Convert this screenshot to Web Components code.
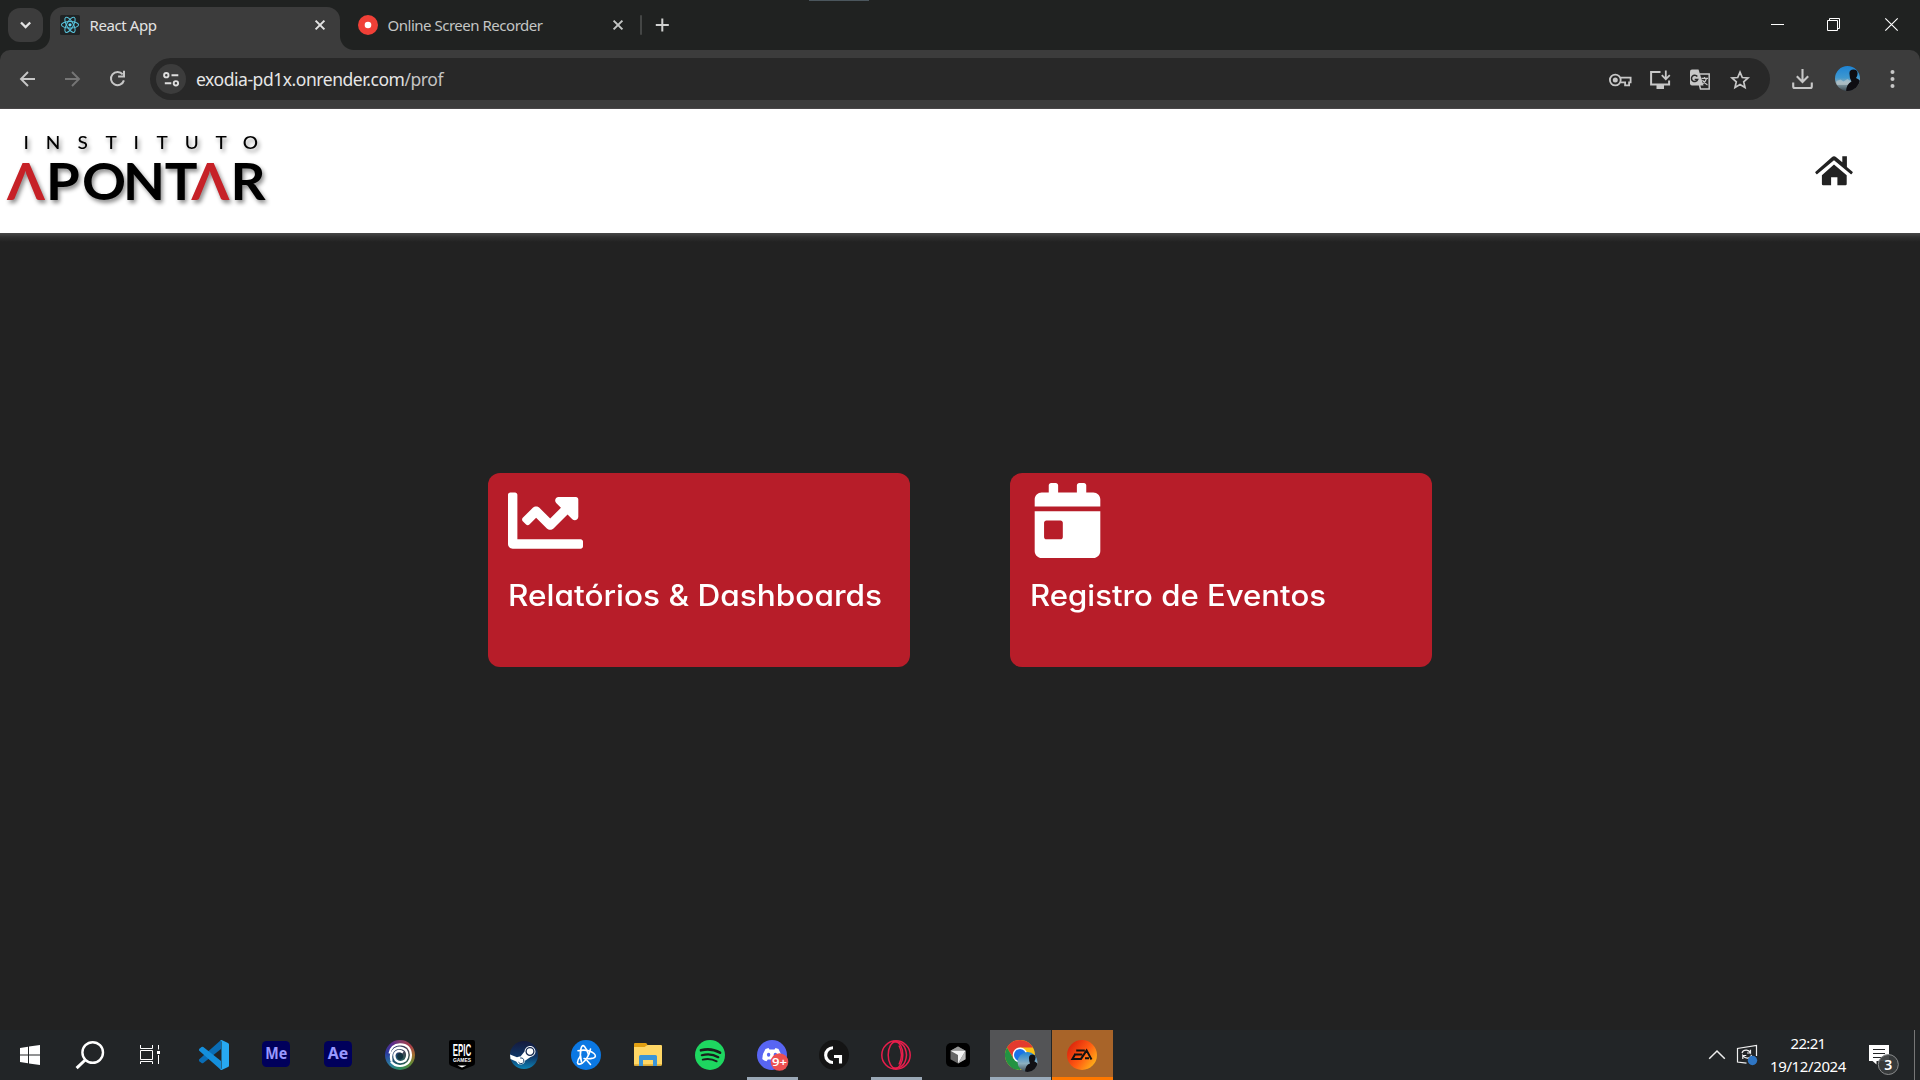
<!DOCTYPE html>
<html lang="pt-BR">
<head>
<meta charset="utf-8">
<title>React App</title>
<style>
html,body{margin:0;height:100%;overflow:hidden;background:#222}
body{font-family:"Noto Sans","Open Sans",sans-serif}
</style>
</head>
<body>
<desktop-screen></desktop-screen>
<script>
// name: [viewBox, markup]
const ICONS = {
  chevron:['8 8 35 34','<path d="M21 22.5l4.6 4.6 4.6-4.6" fill="none" stroke="#e3e3e3" stroke-width="2.3"/>'],
  react:['60 15 20 20','<rect x="60" y="15" width="20" height="20" rx="1.5" fill="#202324"/><g fill="none" stroke="#58c4dc" stroke-width="1.05"><ellipse cx="70" cy="24.8" rx="8.6" ry="3.3"/><ellipse cx="70" cy="24.8" rx="8.6" ry="3.3" transform="rotate(60 70 24.8)"/><ellipse cx="70" cy="24.8" rx="8.6" ry="3.3" transform="rotate(120 70 24.8)"/></g><circle cx="70" cy="24.8" r="1.6" fill="#61dafb"/>'],
  recorder:['358 15 20 20','<circle cx="368" cy="25" r="10" fill="#f04037"/><circle cx="368" cy="25" r="3.3" fill="#fff"/>'],
  close:['310 15 20 20','<path d="M315.6 20.6l8.8 8.8M324.4 20.6l-8.8 8.8" stroke="currentColor" stroke-width="2"/>'],
  plus:['652 15 20 20','<path d="M655.8 25h13M662.3 18.5v13" stroke="#d0d1d0" stroke-width="2"/>'],
  min:['1749 0 57 50','<path d="M1771 24.5h13" stroke="#fff"/>'],
  restore:['1806 0 57 50','<path d="M1827.5 20.5h10v10h-10zM1829.5 20v-1.500h10v10h-1.500" fill="none" stroke="#fff"/>'],
  winclose:['1863 0 57 50','<path d="M1885.300 18.300l12.400 12.400M1897.700 18.300l-12.400 12.400" stroke="#fff" stroke-width="1.150"/>'],
  back:['5 56 45 45','<path d="M35 79H21.500M28 72l-7 7 7 7" fill="none" stroke="#c7c7c7" stroke-width="1.900"/>'],
  forward:['50 56 45 45','<path d="M65 79h13.500M72 72l7 7-7 7" fill="none" stroke="#757575" stroke-width="1.900"/>'],
  reload:['95 56 45 45','<path d="M122.700 74.400A6.600 6.600 0 1 0 123.900 80.400" fill="none" stroke="#c7c7c7" stroke-width="2"/><path d="M125 70.800v6.800h-6.900v-2h4.900v-4.800z" fill="#c7c7c7"/>'],
  tune:['156 64 30 30','<circle cx="171" cy="79" r="15" fill="#3c3c3c"/><g fill="none" stroke="#dedede" stroke-width="1.900"><circle cx="166.300" cy="75.200" r="2.200"/><path d="M171.500 75.200h6.800M164.800 83.300h6.500"/><circle cx="175.900" cy="83.300" r="2.200"/></g>'],
  key:['1600 59 40 40','<g fill="none" stroke="#c7c7c7" stroke-width="1.800"><circle cx="1615.300" cy="80" r="5.400"/><path d="M1620.300 77.700h10.300v4.700h-1.500v3h-4v-3h-5"/></g><circle cx="1615.300" cy="80" r="2.500" fill="#c7c7c7"/>'],
  install:['1640 59 40 40','<path d="M1660.500 72h-9.400v12.400h18v-4" fill="none" stroke="#c7c7c7" stroke-width="2"/><path d="M1656.500 85h7.500v4h-7.500z" fill="#c7c7c7"/><path d="M1665.800 70.500v8M1661.800 75.200l4 4 4-4" fill="none" stroke="#c7c7c7" stroke-width="1.800"/>'],
  translate:['1680 59 40 40','<path d="M1699.500 74h9.700v15h-8.700l-1-4" fill="none" stroke="#c7c7c7" stroke-width="1.500"/><path d="M1692 69.500h6.500l5 16H1692q-2 0-2-2v-12q0-2 2-2z" fill="#c7c7c7"/><path d="M1697.300 76.500a3.200 3.200 0 1 0 .4 3h-3" fill="none" stroke="#282828" stroke-width="1.500"/><path d="M1701.500 78.300h6.500M1704.500 77v1.500M1706.500 78.500q-1 3.500-4 5.500M1702.500 80q1.500 3 5 5" fill="none" stroke="#c7c7c7" stroke-width="1.200"/>'],
  star:['1720 59 40 40','<path d="M1740 72.200l2.300 5.300 5.700.5-4.300 3.800 1.300 5.600-5-3-5 3 1.300-5.600-4.300-3.800 5.700-.5z" fill="none" stroke="#c7c7c7" stroke-width="1.700"/>'],
  download:['1780 56 45 45','<path d="M1802.500 69v12M1796.800 76.300l5.700 5.700 5.700-5.700M1793.200 82.500v4q0 1.500 1.500 1.500h15.600q1.500 0 1.500-1.500v-4" fill="none" stroke="#c7c7c7" stroke-width="2.100"/>'],
  avatar:['1835.500 66 25 25','<defs><linearGradient id="a" x2="0" y2="1"><stop stop-color="#1d83d4"/><stop offset=".45" stop-color="#3f98cf"/><stop offset=".65" stop-color="#8fa9b3"/><stop offset="1" stop-color="#313d46"/></linearGradient><clipPath id="c"><circle cx="1848" cy="78.500" r="12.500"/></clipPath></defs><g clip-path="url(#c)"><path d="M1835 66h26v26h-26z" fill="url(#a)"/><path d="M1837 81l4-1.500 3 2 4-2.500 3 2v4h-14z" fill="#c0cbd0" opacity=".6"/><path d="M1850 74q-.5-4.500 4-4.500t4 4.500q0 2.500-1.500 4 4.500 2 5 5v10h-15q0-9 5.500-11.500-2-2.500-2-7.500z" fill="#0e0d12"/></g>'],
  dots:['1870 56 45 45','<g fill="#c7c7c7"><circle cx="1892.500" cy="72" r="2"/><circle cx="1892.500" cy="79" r="2"/><circle cx="1892.500" cy="86" r="2"/></g>'],
  home:['1815 155 38 32','<g fill="#222"><path d="M1834 164.600l12.700 10.700v8.700q0 1.200-1.200 1.200h-8.100V177.200h-6.300v8h-8q-1.200 0-1.200-1.200v-8.700z"/><path d="M1842.300 156.300h4.600v10.600l5.600 4.800q.6.500.1 1.100l-.9 1.100q-.5.600-1.100.1L1834 160.300l-16.600 13.700q-.6.500-1.100-.1l-.9-1.100q-.5-.6.100-1.100l16.300-14.500q2.200-1.700 4.400 0l6.100 5.100z"/></g>'],
  chart:['0 0 512 512','<path fill="#fff" d="M496 384H64V80c0-8.840-7.160-16-16-16H16C7.160 64 0 71.160 0 80v336c0 17.670 14.330 32 32 32h464c8.840 0 16-7.160 16-16v-32c0-8.840-7.160-16-16-16zM464 96H345.940c-21.380 0-32.090 25.850-16.970 40.970l32.400 32.400L288 242.750l-73.370-73.370c-12.500-12.500-32.760-12.500-45.250 0l-68.690 68.690c-6.250 6.250-6.250 16.380 0 22.630l22.620 22.620c6.250 6.250 16.380 6.250 22.630 0L192 237.250l73.370 73.370c12.500 12.500 32.760 12.500 45.250 0l96-96 32.400 32.400c15.120 15.120 40.970 4.410 40.970-16.970V112c.01-8.840-7.150-16-15.990-16z"/>'],
  calendar:['0 0 448 512','<path fill="#fff" d="M0 464c0 26.500 21.500 48 48 48h352c26.500 0 48-21.500 48-48V192H0v272zm64-192c0-8.800 7.200-16 16-16h96c8.800 0 16 7.200 16 16v96c0 8.800-7.200 16-16 16H80c-8.800 0-16-7.200-16-16v-96zM400 64h-48V16c0-8.800-7.200-16-16-16h-32c-8.800 0-16 7.200-16 16v48H160V16c0-8.800-7.200-16-16-16h-32c-8.800 0-16 7.200-16 16v48H48C21.500 64 0 85.500 0 112v48h448v-48c0-26.500-21.500-48-48-48z"/>'],
  // taskbar icons, origin at the icon centre
  windows:['-20 -20 40 40','<path fill="#fff" d="M-10-7l8-1.200v7.700h-8zM-1-8.400L10-10v9.500H-1zM-10 .5h8v7.700l-8-1.200zM-1 .5h11V10L-1 8.400z"/>'],
  search:['-20 -20 40 40','<circle cx="2.700" cy="-2.500" r="10.300" fill="none" stroke="#fff" stroke-width="2.400"/><path d="M-4.800 5l-8.600 8.200" stroke="#fff" stroke-width="3"/>'],
  taskview:['-20 -20 40 40','<path d="M-9.500-10v3.500h12V-10M-9.500-4.500h12v9h-12zM-9.500 9V6.500h12V9M8.500-10v4.500M8.500 0v9" fill="none" stroke="#fff"/><path d="M7-4h3v3H7z" fill="#fff"/>'],
  vscode:['-20 -20 40 40','<path fill="#0a6db5" d="M-15 4.500q-.3 1 .4 1.700l2.100 1.800q.9.600 1.800 0L7-6v-9z"/><path fill="#148fdc" d="M-15-4.500q-.3-1 .4-1.700l2.100-1.800q.9-.6 1.800 0L7 6v9z"/><path fill="#27a9f2" d="M6-14.500q1-.8 2.200-.3L14-12q1 .5 1 1.600v20.800q0 1.100-1 1.600L8.200 14.800Q7 15.300 6 14.500q1.500.3 1.500-1.500v-26q0-1.800-1.500-1.500z"/>'],
  me:['-20 -20 40 40','<rect x="-14" y="-14" width="28" height="26" rx="4.500" fill="#00005b"/><text x=".2" y="4.200" text-anchor="middle" font-size="16.500" font-weight="700" textLength="22" lengthAdjust="spacingAndGlyphs" fill="#9999ff">Me</text>'],
  ae:['-20 -20 40 40','<rect x="-14" y="-14" width="28" height="26" rx="4.500" fill="#00005b"/><text x="0" y="4.200" text-anchor="middle" font-size="16.500" font-weight="700" textLength="20.500" lengthAdjust="spacingAndGlyphs" fill="#9999ff">Ae</text>'],
  ubisoft:['-20 -20 40 40','<foreignObject x="-15" y="-15" width="30" height="30"><div style="width:30px;height:30px;border-radius:50%;background:conic-gradient(#803a6a,#a83f48 50deg,#a07030 90deg,#5f8a35 130deg,#2c8a60 180deg,#2c7fa0 225deg,#2a3a9e 280deg,#5a2a8e 325deg,#803a6a)"></div></foreignObject><circle r="10" fill="#1f4560" opacity=".75"/><g fill="none" stroke="#fff"><path d="M-10.500-1.500Q-9-10.500 0-10.800 10.500-10.500 11 0 10.500 10.500 0 11-5.500 11-9 6.500" stroke-width="2.100"/><path d="M-8.500 6Q-10.500-2-5-6 1-9 5.700-5 9 0 5.500 5.200 0 9-4.200 5.200-7.500 0-3.500-3.300 0-5 3-2.500" stroke-width="2.300"/></g><path d="M-3 1.500Q-2.500-2.500 1-2 4.200-.5 2.800 3 .5 6-2 4z" fill="#12323e"/>'],
  epic:['-20 -20 40 40','<path fill="#000" d="M-11-15h22q2 0 2 2V8q0 2-2 2.800L0 15l-11-4.200Q-13 10-13 8v-21q0-2 2-2z"/><text x="0" y=".8" text-anchor="middle" font-family="Liberation Sans" font-weight="700" font-size="17" fill="#fff" textLength="18.500" lengthAdjust="spacingAndGlyphs">EPIC</text><text x="0" y="7" text-anchor="middle" font-family="Liberation Sans" font-weight="700" font-size="5.200" fill="#fff" textLength="18" lengthAdjust="spacingAndGlyphs">GAMES</text><path d="M-4.500 10.500h9L0 12.500z" fill="#fff"/>'],
  steam:['-20 -20 40 40','<defs><linearGradient id="s" x2="0" y2="1"><stop stop-color="#151a3c"/><stop offset=".55" stop-color="#0f3566"/><stop offset="1" stop-color="#0d83b5"/></linearGradient></defs><circle r="14" fill="url(#s)"/><path d="M-14-.500L-7 2.300q2-1 3.500-.8L.5-3.500A5.500 5.500 0 1 1 6.500 2L1 5.700Q.500 9.500-3.500 9.500-6.500 9.300-7.800 6.500L-13.500 4z" fill="#fff"/><circle cx="6" cy="-3.500" r="3.900" fill="#fff" stroke="#14284e" stroke-width="1.300"/><path d="M-5.500 7.200a2.900 2.900 0 1 0 1.700-4.200" fill="none" stroke="#14406b" stroke-width="1"/>'],
  bnet:['-20 -20 40 40','<circle r="15" fill="#0b78e3"/><g fill="none" stroke="#fff" stroke-width="1.600" stroke-linejoin="round" stroke-linecap="round"><path d="M-4.500 7Q-6.500 0-5-6.500-3.800-11-1.500-8.500 1-5.500 2.500-.5"/><path d="M-8-4.300Q2-6.300 8-1.500 11 1.500 7.500 3 3 4.300-2 3.500"/><path d="M4.500-6Q2.500 3-3.500 8-8 10.500-8.500 7.500-8.300 4.500-5.500 1M1 5.500L4.500 9.500"/></g>'],
  explorer:['-20 -20 40 40','<path d="M-14-11q0-1 1-1h10.500q1 0 1.500 1l1 2.500h13v19h-27z" fill="#e2a012"/><path d="M-14-8h10.500l3-2H13q1 0 1 1v18.500q0 1-1 1h-26q-1 0-1-1z" fill="#ffd766"/><path d="M-14 9h28v.500q0 1-1 1h-26q-1 0-1-1z" fill="#e9b63b"/><path d="M-9 11V1.500Q-9 0-7.500 0h15Q9 0 9 1.500V11H5V5H-5v6z" fill="#3b95d8"/>'],
  spotify:['-20 -20 40 40','<circle r="15" fill="#1ed760"/><g fill="none" stroke="#191f1c" stroke-linecap="round"><path d="M-9-4.700Q1-7.500 10-2.300" stroke-width="2.700"/><path d="M-8.200.2Q1-2.300 8.300 2.200" stroke-width="2.200"/><path d="M-7.300 4.700Q0 2.700 6.700 6.400" stroke-width="1.800"/></g>'],
  discord:['-20 -20 40 40','<circle r="15" fill="#5865f2"/><path d="M-6.500-6l3-.9 1 1.400h5l1-1.400 3 .9q3.300 5 3.200 10-2 2-4.200 2.300L4.200 4.500h-8.400l-1.300 1.800Q-8 6-9.700 4q0-5.500 3.200-10z" fill="#fff"/><ellipse cx="-3.400" cy="-.2" rx="1.700" ry="2" fill="#5865f2"/><ellipse cx="3.400" cy="-.2" rx="1.700" ry="2" fill="#5865f2"/><circle cx="7.500" cy="7" r="8.800" fill="#ed5051"/><text x="7.500" y="11" text-anchor="middle" font-size="11.500" font-weight="600" fill="#fff" textLength="15" lengthAdjust="spacingAndGlyphs">9+</text>'],
  logi:['-20 -20 40 40','<circle r="15" fill="#141414"/><path d="M-1-7.200A7.200 7.200 0 0 0-1 7.500M1.500 1.500H6.500V8.500M0 1.500h3" fill="none" stroke="#fff" stroke-width="3.100"/>'],
  opera:['-20 -20 40 40','<g fill="none" stroke="#e81e4c" stroke-width="1.500"><circle r="14.200"/><ellipse cx="-.500" rx="7.300" ry="13.300"/><path d="M-3-13.500Q9.500-14 10.500 0 9.500 14-3 13.500"/><path d="M3-9.500Q8 0 3 9.500"/></g>'],
  cursor:['-20 -20 40 40','<rect x="-12" y="-12" width="24" height="24" rx="5" fill="#000"/><path d="M0-8.500l7.500 4.300v8.500L0 8.500l-7.500-4.200v-8.500z" fill="#666"/><path d="M0-8.500l7.500 4.300H-7.500z" fill="#999"/><path d="M-7.500-4.200H7.500L0 8.500V0z" fill="#f4f4f4"/><path d="M7.500-4.200v8.500L0 8.500z" fill="#bbb"/>'],
  chrome:['-20 -20 40 40','<circle r="15" fill="#fbc116"/><path d="M-13-7.500A15 15 0 0 1 13-7.500H0L-6.500 3.700z" fill="#e33b2e"/><path d="M-13-7.500A15 15 0 0 0 0 15L6.500 3.700-6.500 3.700z" fill="#229342"/><circle r="7.400" fill="#fff"/><circle r="6" fill="#1a73e8"/><defs><linearGradient id="b" x2="0" y2="1"><stop stop-color="#1d83d4"/><stop offset=".55" stop-color="#8bb0c0"/><stop offset="1" stop-color="#353d45"/></linearGradient><clipPath id="d"><circle cx="7.500" cy="7" r="10"/></clipPath></defs><g clip-path="url(#d)"><path d="M-3-3h21v21H-3z" fill="url(#b)"/><path d="M9 3q0-3.500 3.500-3.500T15.500 3q0 2-1.200 3.200Q18 8 18 11v7H5q0-8 5-9.500Q9 6.500 9 3z" fill="#101014"/></g>'],
  ea:['-20 -20 40 40','<defs><linearGradient id="e" x1="0" y1=".2" x2="1" y2=".9"><stop stop-color="#d8200c"/><stop offset=".5" stop-color="#ff5a12"/><stop offset="1" stop-color="#ffc21a"/></linearGradient></defs><circle r="15" fill="url(#e)"/><g fill="none" stroke="#111" stroke-width="2"><path d="M-5.800-4.500H2.800M-8-.4H.2M-7-.4l-2.600 4.300H-1L4.600-4.600 9.500 4.500M3 3.300h4"/></g>'],
  up:['-12 -20 24 40','<path d="M-7.800 3.800L0-4l7.800 7.800" fill="none" stroke="#eee" stroke-width="1.500"/>'],
  sync:['1735 1035 30 40','<path d="M1756.500 1056v-10.500l-19 3v13.500l9 1.200" fill="none" stroke="#f0f0f0" stroke-width="1.200"/><path d="M1742 1053q1-3 4.500-2.800 2.500.2 4 2.500v-3M1750.500 1053h-3.500M1751.500 1055q-.8 3.300-4.200 3.200-2.800-.2-4.500-2.700v3.500M1742.800 1055.500h3.500" fill="none" stroke="#f0f0f0" stroke-width="1.200"/><circle cx="1752.500" cy="1060.500" r="4.700" fill="#2f76c4"/>'],
  notify:['1865 1035 40 45','<path d="M1869 1045h20v16h-12.500v3.500l-4-3.500h-3.500z" fill="#fff"/><path d="M1873 1049.500h12M1873 1053.500h12M1873 1057.500h9" stroke="#222426"/><circle cx="1888.300" cy="1064.500" r="10" fill="#3a3c3d" fill-opacity=".92" stroke="#8a8c8d"/><text x="1888.300" y="1069.500" text-anchor="middle" font-size="14" font-weight="600" fill="#fff">3</text>'],
};

class UiIcon extends HTMLElement {
  connectedCallback() {
    const [vb, body] = ICONS[this.getAttribute('name')];
    const d = vb.split(' ');
    const w = this.getAttribute('w') || d[2], h = this.getAttribute('h') || d[3];
    this.attachShadow({mode:'open'}).innerHTML =
      `<style>:host{display:block;flex:none}svg{display:block;overflow:visible}</style><svg width="${w}" height="${h}" viewBox="${vb}">${body}</svg>`;
  }
}

// One line of text fitted to a given width, by tracking or (with "stretch") by widening the glyphs.
class FitText extends HTMLElement {
  connectedCallback() {
    this.attachShadow({mode:'open'}).innerHTML =
      `<style>:host{display:block;flex:none;white-space:nowrap}span{display:inline-block;transform-origin:0 50%}</style><span><slot></slot></span>`;
    const s = this.shadowRoot.querySelector('span');
    const w = +this.getAttribute('w');
    this.style.width = w + 'px';
    const natural = s.getBoundingClientRect().width;
    if (this.hasAttribute('stretch')) s.style.transform = `scaleX(${w / natural})`;
    else s.style.letterSpacing = (w - natural) / this.textContent.length + 'px';
  }
}

class TabStrip extends HTMLElement {
  connectedCallback() {
    this.attachShadow({mode:'open'}).innerHTML = `<style>
:host{display:flex;height:50px;background:#202221;position:relative;box-sizing:border-box;padding-left:8px;color:#e3e3e3;font-size:15px}
.menu{width:35px;height:34px;margin:8px 7px 0 0;border-radius:12px;background:#3c3c3c}
.tab{display:flex;align-items:center;box-sizing:border-box}
.on{position:relative;width:290px;height:43px;margin-top:7px;padding:0 10px 7px 10px;background:#3c3c3c;border-radius:13px 13px 0 0}
.on::before,.on::after{content:"";position:absolute;bottom:0;width:14px;height:14px}
.on::before{left:-14px;background:radial-gradient(circle at 0 0,transparent 13.500px,#3c3c3c 14.500px)}
.on::after{right:-14px;background:radial-gradient(circle at 100% 0,transparent 13.500px,#3c3c3c 14.500px)}
.off{height:50px;margin-left:18px;color:#c4c6c5}
fit-text{margin:0 0 1px 9.500px;line-height:20px}
.on ui-icon[name=close]{margin-left:auto}
.off ui-icon[name=close]{margin-left:65px}
.sep{width:2px;height:20px;background:#444645;margin:15px 10px 0 12.500px;border-radius:1px}
ui-icon[name=plus]{margin-top:15px}
.win{display:flex;margin-left:auto}
.edge{position:absolute;left:809px;top:0;width:60px;height:1px;background:#4b565d}
</style>
<ui-icon class="menu" name="chevron"></ui-icon>
<div class="tab on"><ui-icon name="react"></ui-icon><fit-text w="67">React App</fit-text><ui-icon name="close"></ui-icon></div>
<div class="tab off"><ui-icon name="recorder"></ui-icon><fit-text w="155">Online Screen Recorder</fit-text><ui-icon name="close"></ui-icon></div>
<div class="sep"></div><ui-icon name="plus"></ui-icon>
<div class="win"><ui-icon name="min"></ui-icon><ui-icon name="restore"></ui-icon><ui-icon name="winclose"></ui-icon></div>
<div class="edge"></div>`;
  }
}

class ToolBar extends HTMLElement {
  connectedCallback() {
    this.attachShadow({mode:'open'}).innerHTML = `<style>
:host{display:block;height:59px;background:#202221}
.bar{display:flex;align-items:center;height:59px;box-sizing:border-box;padding:0 5px 1px;background:#3c3c3c;border-bottom:1px solid #494648;border-radius:10px 10px 0 0}
.omni{display:flex;align-items:center;width:1620px;height:42px;box-sizing:border-box;margin:0 10px;padding:0 10px 0 6px;border-radius:21px;background:#282828}
fit-text{margin:0 auto 0 10px;font-size:17.500px;line-height:24px;color:#e6e6e6}
.path{color:#c4c4c4}
ui-icon[name=avatar]{margin:0 10px 0 10px}
</style>
<div class="bar"><ui-icon name="back"></ui-icon><ui-icon name="forward"></ui-icon><ui-icon name="reload"></ui-icon>
<div class="omni"><ui-icon name="tune"></ui-icon><fit-text w="247">exodia-pd1x.onrender.com<span class="path">/prof</span></fit-text>
<ui-icon name="key"></ui-icon><ui-icon name="install"></ui-icon><ui-icon name="translate"></ui-icon><ui-icon name="star"></ui-icon></div>
<ui-icon name="download"></ui-icon><ui-icon name="avatar"></ui-icon><ui-icon name="dots"></ui-icon></div>`;
  }
}

class SiteHeader extends HTMLElement {
  connectedCallback() {
    this.attachShadow({mode:'open'}).innerHTML = `<style>
:host{display:flex;align-items:flex-start;justify-content:space-between;height:124px;box-sizing:border-box;padding-right:67px;background:#fff}
svg{display:block;filter:drop-shadow(2px 3px 2px rgba(0,0,0,.45))}
ui-icon{margin-top:46px}
</style>
<svg width="280" height="124" viewBox="0 109 280 124" font-family="Lato, sans-serif">
<text y="149" font-size="18" font-weight="500" transform="scale(1.06 1)" x="22.200 43.200 73.100 99.600 126 147.700 174.300 203.400 229.100" fill="#000">INSTITUTO</text>
<text y="199.700" font-size="51.500" font-weight="700" transform="scale(1.06 1)" x="6.600 43.500 77.300 116 155.500 180.600 217.500" fill="#000"><tspan fill="#c62127">Λ</tspan>PONT<tspan fill="#c62127">Λ</tspan>R</text>
</svg><ui-icon name="home"></ui-icon>`;
  }
}

class MenuCard extends HTMLElement {
  connectedCallback() {
    this.attachShadow({mode:'open'}).innerHTML = `<style>
:host{display:flex;flex-direction:column;width:422px;height:194px;box-sizing:border-box;padding:10px 20px;border-radius:12px;background:#b71d29;color:#fff}
fit-text{margin-top:14px;margin-left:-.5px;font:500 29.500px/46px Inter,sans-serif;font-feature-settings:"cv11"}
</style><ui-icon name="${this.getAttribute('icon')}" w="75" h="75"></ui-icon><fit-text stretch w="${this.getAttribute('text-width')}">${this.getAttribute('label')}</fit-text>`;
  }
}

class TaskBar extends HTMLElement {
  connectedCallback() {
    const apps = ['vscode','me','ae','ubisoft','epic','steam','bnet','explorer','spotify','discord','logi','opera','cursor','chrome','ea'];
    this.attachShadow({mode:'open'}).innerHTML = `<style>
:host{display:flex;height:50px;background:#222527;color:#fff;font-size:15px}
.sys,.app{display:flex;align-items:center;justify-content:center;width:60px;height:50px;flex:none;box-sizing:border-box}
.sys.last{margin-right:3px}
.app{width:62px}
.discord,.opera{background:linear-gradient(#9aa8b6,#9aa8b6) 6px 47px/51px 3px no-repeat}
.chrome{background:linear-gradient(#9aabbb,#9aabbb) 1px 47px/61px 3px no-repeat,linear-gradient(#535456,#535456) 1px 0/61px 50px no-repeat}
.ea{background:linear-gradient(#ff7800,#ff7800) 1px 47px/61px 3px no-repeat,linear-gradient(#a86429,#a86429) 1px 0/61px 50px no-repeat}
.tray{display:flex;align-items:center;margin-left:auto}
.up{margin-right:6px}
.clock{display:flex;flex-direction:column;align-items:center;margin:0 19px 1px 5.500px}
.clock fit-text{line-height:23px}
.show{width:1px;height:50px;background:#777;margin:0 5px 0 9px}
ui-icon[name=notify]{align-self:flex-start;margin-top:5px}
</style>
<div class="sys"><ui-icon name="windows"></ui-icon></div><div class="sys"><ui-icon name="search"></ui-icon></div><div class="sys last"><ui-icon name="taskview"></ui-icon></div>
${apps.map(a => `<div class="app ${a}"><ui-icon name="${a}"></ui-icon></div>`).join('')}
<div class="tray"><ui-icon class="up" name="up"></ui-icon><ui-icon name="sync"></ui-icon>
<div class="clock"><fit-text w="35">22:21</fit-text><fit-text w="76">19/12/2024</fit-text></div>
<ui-icon name="notify"></ui-icon><div class="show"></div></div>`;
  }
}

class DesktopScreen extends HTMLElement {
  connectedCallback() {
    this.attachShadow({mode:'open'}).innerHTML = `<style>
:host{display:flex;flex-direction:column;width:1920px;height:1080px;background:#222}
main{flex:1;display:flex;justify-content:center;align-items:flex-start;gap:100px;padding-top:240px;background:linear-gradient(#484848,#303030 4px,#222 9px)}
</style>
<tab-strip></tab-strip><tool-bar></tool-bar><site-header></site-header>
<main><menu-card icon="chart" label="Relatórios &amp;amp; Dashboards" text-width="374"></menu-card><menu-card icon="calendar" label="Registro de Eventos" text-width="296"></menu-card></main>
<task-bar></task-bar>`;
  }
}
customElements.define('ui-icon', UiIcon);
customElements.define('fit-text', FitText);
customElements.define('tab-strip', TabStrip);
customElements.define('tool-bar', ToolBar);
customElements.define('site-header', SiteHeader);
customElements.define('menu-card', MenuCard);
customElements.define('task-bar', TaskBar);
customElements.define('desktop-screen', DesktopScreen);
</script>
</body>
</html>
